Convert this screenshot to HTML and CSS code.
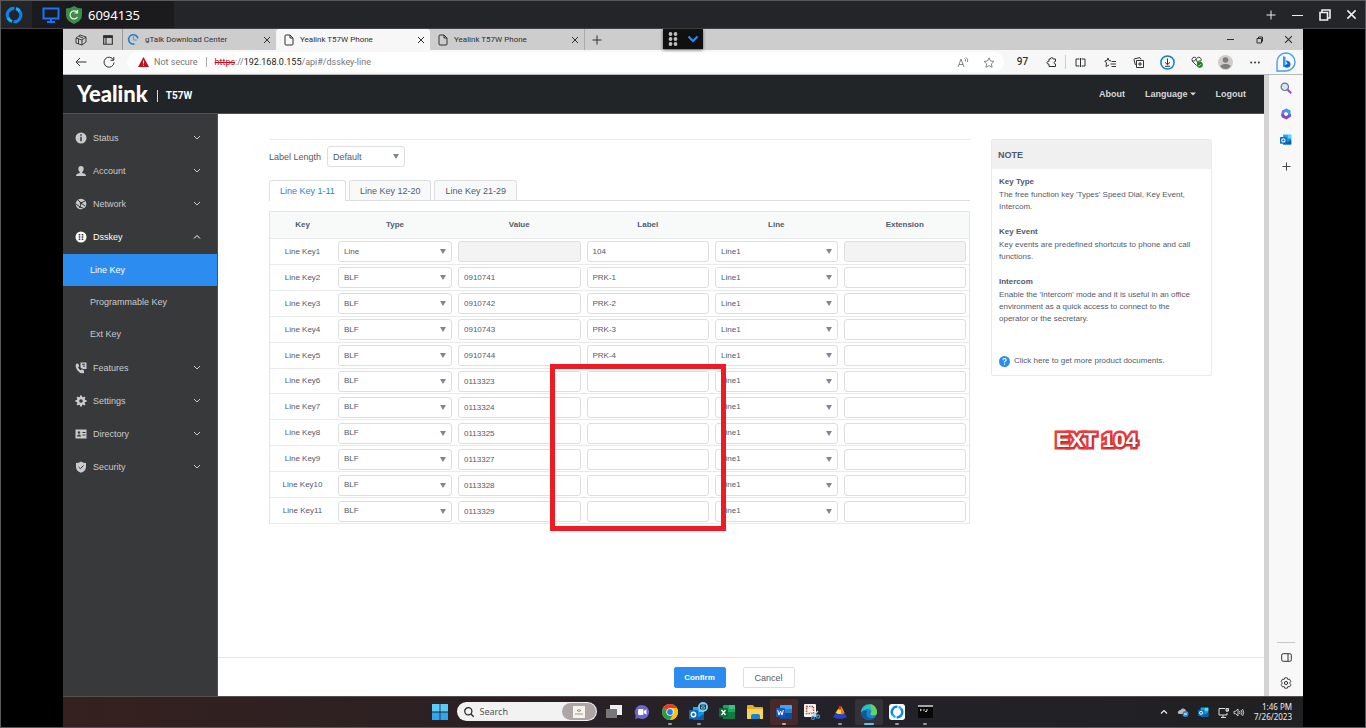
FILE: index.html
```html
<!DOCTYPE html>
<html lang="en">
<head>
<meta charset="utf-8">
<title>Yealink T57W Phone</title>
<link rel="stylesheet" href="styles.css">
</head>
<body>
<svg class="defs" aria-hidden="true">
  <symbol id="close" viewBox="0 0 8 8"><path d="M1 1l6 6M7 1L1 7" fill="none" stroke="currentColor"/></symbol>
  <symbol id="plus" viewBox="0 0 10 10"><path d="M5 0.5v9M0.5 5h9" fill="none" stroke="currentColor"/></symbol>
  <symbol id="page" viewBox="0 0 10 12"><path d="M1 2q0-1 1-1h4l3 3v6q0 1-1 1H2q-1 0-1-1zM6 1v3h3" fill="none" stroke="currentColor"/></symbol>
  <symbol id="down" viewBox="0 0 8 6"><path d="M1 1l3 3 3-3" fill="none" stroke="currentColor"/></symbol>
  <symbol id="outlook" viewBox="0 0 16 16"><path d="M5 1h9q1 0 1 1v11q0 1-1 1H5q-1 0-1-1V2q0-1 1-1z" fill="#1490df"/><path d="M10 1h5v5h-5z" fill="#50d9ff"/><path d="M4 1h6v5H4z" fill="#28a8ea"/><path d="M4 8l6 3 5-3v6H4z" fill="#0a5ea8"/><rect y="4" width="9" height="9" rx="1" fill="#0f6cbd"/><circle cx="4.500" cy="8.500" r="2.200" fill="none" stroke="#fff" stroke-width="1.400"/></symbol>
  <symbol id="ring" viewBox="0 0 18 18"><g fill="none" stroke-width="3"><path d="M3.600 13A6.800 6.800 0 0 1 9.500 2.200" stroke="#0a84f5"/><path d="M11 2.500A6.800 6.800 0 0 1 15 6" stroke="#12b4ff"/><path d="M14.600 5.200A6.800 6.800 0 0 1 8.500 15.800" stroke="#0a84f5"/><path d="M7 15.500A6.800 6.800 0 0 1 3 12" stroke="#12b4ff"/></g></symbol>
</svg>

<div class="viewer">
  <header class="session-bar">
    <span class="session-home"><svg width="18" height="18"><use href="#ring"/></svg></span>
    <div class="session-tab">
      <svg width="18" height="16" viewBox="0 0 18 16"><path d="M1.500 1.500h15v10h-15zM9 12v2.500M5 15h8" fill="none" stroke="#1473ff" stroke-width="2"/></svg>
      <svg width="16" height="18" viewBox="0 0 16 18"><path d="M8 0q4 2.500 8 2.500V9q0 6-8 9-8-3-8-9V2.500Q4 2.500 8 0z" fill="#3d8b46"/><path d="M11 6.200A4 4 0 1 0 11.500 11M11.500 4v3H8.500" fill="none" stroke="#e4f2e4" stroke-width="1.200"/></svg>
      <span>6094135</span>
    </div>
    <div class="session-controls">
      <button aria-label="New session"><svg width="10" height="10"><use href="#plus"/></svg></button>
      <button aria-label="Minimize"><svg width="11" height="10" viewBox="0 0 11 10"><path d="M0 5.500h11" stroke="currentColor" stroke-width="1"/></svg></button>
      <button aria-label="Restore"><svg width="12" height="12" viewBox="0 0 12 12"><path d="M1 3.500h7.500V11H1zM3 3V1h8v8H9" fill="none" stroke="currentColor" stroke-width="1.600"/></svg></button>
      <button aria-label="Close"><svg width="11" height="11" viewBox="0 0 8 8"><path d="M1 1l6 6M7 1L1 7" stroke="currentColor" stroke-width="1.100"/></svg></button>
    </div>
  </header>

  <div class="desktop">
    <div class="tab-strip">
      <button class="strip-button" aria-label="Workspaces"><svg width="12" height="12" viewBox="0 0 12 12"><path d="M1 4l4-3 6 2v5l-4 3-6-2zM1 4l6 2 4-3M7 6v5M4 2.500l4 1.500M3.500 5v5" fill="none" stroke="currentColor" stroke-width="0.900"/></svg></button>
      <button class="strip-button" aria-label="Tab actions"><svg width="10" height="10" viewBox="0 0 10 10"><path d="M0.700 0.700h8.600v8.600H0.700zM3 3v6" fill="none" stroke="currentColor" stroke-width="1.100"/><path d="M0.500 0.500h9v2.500h-9z" fill="currentColor"/></svg></button>
      <div class="tab tab-first"><svg width="11" height="11" viewBox="0 0 11 11"><path d="M6.500 10A4.700 4.700 0 1 1 10 4.500" fill="none" stroke="#2580c3" stroke-width="1.600"/><path d="M5.500 2v4h3.500" fill="none" stroke="#55a4d8" stroke-width="1.200"/></svg><span>gTalk Download Center</span><button aria-label="Close tab"><svg width="8" height="8"><use href="#close"/></svg></button></div>
      <div class="tab tab-active"><svg width="10" height="12"><use href="#page"/></svg><span>Yealink T57W Phone</span><button aria-label="Close tab"><svg width="8" height="8"><use href="#close"/></svg></button></div>
      <div class="tab"><svg width="10" height="12"><use href="#page"/></svg><span>Yealink T57W Phone</span><button aria-label="Close tab"><svg width="8" height="8"><use href="#close"/></svg></button></div>
      <button class="new-tab" aria-label="New tab"><svg width="10" height="10"><use href="#plus"/></svg></button>
      <div class="window-controls">
        <button aria-label="Minimize"><svg width="7" height="7" viewBox="0 0 7 7"><path d="M0 3.500h7" stroke="currentColor"/></svg></button>
        <button aria-label="Restore"><svg width="8" height="8" viewBox="0 0 8 8"><path d="M1 2.500h4.500V7H1zM2.500 2V1h4v4.500H6" fill="none" stroke="currentColor"/></svg></button>
        <button aria-label="Close"><svg width="9" height="9"><use href="#close"/></svg></button>
      </div>
      <div class="grip">
        <svg width="10" height="14" viewBox="0 0 10 14" fill="#bdbdbd"><circle cx="2.500" cy="2" r="1.900"/><circle cx="7.500" cy="2" r="1.900"/><circle cx="2.500" cy="7" r="1.900"/><circle cx="7.500" cy="7" r="1.900"/><circle cx="2.500" cy="12" r="1.900"/><circle cx="7.500" cy="12" r="1.900"/></svg>
        <svg width="12" height="8" viewBox="0 0 12 8"><path d="M1.500 1.500L6 6l4.500-4.500" fill="none" stroke="#1e90ff" stroke-width="2"/></svg>
      </div>
    </div>

    <div class="toolbar">
      <button class="nav-button" aria-label="Back"><svg width="12" height="10" viewBox="0 0 12 10"><path d="M11.500 5H1M5 1L1 5l4 4" fill="none" stroke="currentColor"/></svg></button>
      <button class="nav-button" aria-label="Reload"><svg width="12" height="12" viewBox="0 0 12 12"><path d="M10.500 4A5 5 0 1 0 11 6.500M10.800 1v3.300H7.500" fill="none" stroke="currentColor"/></svg></button>
      <div class="address">
        <svg width="11" height="10" viewBox="0 0 11 10"><path d="M5.500 0L11 10H0z" fill="#c50f1f"/><path d="M5.500 3.500v3.200M5.500 7.800v1" stroke="#fff"/></svg>
        <span class="insecure">Not secure</span>
        <span class="url"><s>https</s>://<b>192.168.0.155</b>/api#/dsskey-line</span>
        <button aria-label="Read aloud"><svg width="12" height="11" viewBox="0 0 12 11"><path d="M1 10l3-8 3 8M2 7.500h4M7.500 1.500q1.500 1 1 3M9 0.500q2.500 2 1.500 4.500" fill="none" stroke="currentColor" stroke-width="0.900"/></svg></button>
        <button aria-label="Favorite"><svg width="12" height="11" viewBox="0 0 12 11"><path d="M6 0.800l1.500 3.200 3.500.4-2.600 2.400.7 3.500L6 8.600l-3.100 1.700.7-3.500L1 4.400 4.500 4z" fill="none" stroke="currentColor" stroke-width="0.900"/></svg></button>
      </div>
      <div class="tools">
        <button class="counter">97</button>
        <button class="tool-divided" aria-label="Extensions"><svg width="11" height="11" viewBox="0 0 11 11"><path d="M3 2h1.500q0-1.500 1.200-1.500T7 2h2.500v2.500Q8 4.500 8 5.700T9.500 7v2.500H3V7.200Q1 7.300 1 5.700T3 4.300z" fill="none" stroke="currentColor"/></svg></button>
        <button aria-label="Split screen"><svg width="11" height="9" viewBox="0 0 11 9"><path d="M4.500 1H1v7h3.500M6.500 1H10v7H6.500M5.500 0v9" fill="none" stroke="currentColor"/></svg></button>
        <button aria-label="Favorites"><svg width="12" height="11" viewBox="0 0 12 11"><path d="M7 4L5 3.500 4 1 3 3.500.8 4 2.500 6 2 9.500l3-1.500M7.500 4.500H12M6.500 7H12M7.500 9.500H12" fill="none" stroke="currentColor"/></svg></button>
        <button aria-label="Collections"><svg width="11" height="11" viewBox="0 0 11 11"><path d="M3.500 3.500h7v7h-7zM7 5v4M5 7h4M2.500 8L1 3q-.3-1 .7-1.300L7 .7l1 1.800" fill="none" stroke="currentColor"/></svg></button>
        <button aria-label="Downloads"><svg width="15" height="15" viewBox="0 0 15 15"><circle cx="7.500" cy="7.500" r="6.600" fill="none" stroke="#0f7ac6" stroke-width="1.500"/><path d="M7.500 3.500v6M5 7.300l2.500 2.400L10 7.300M5 11.300h5" fill="none" stroke="currentColor"/></svg></button>
        <button aria-label="Browser essentials"><svg width="12" height="12" viewBox="0 0 12 12"><path d="M5.500 9.500L1.500 5.500Q0 3 2 1.500q2-1 3.500 1 1.500-2 3.500-1 2 1.500 1 3.500M1 5h2.500L5 3l1.500 3.500 1-1.500H10" fill="none" stroke="currentColor" stroke-width="0.900"/><circle cx="8.800" cy="8.800" r="3" fill="#13851a"/><path d="M7.300 9l1 1 1.800-2" fill="none" stroke="#fff" stroke-width="0.700"/></svg></button>
        <button aria-label="Profile"><svg width="15" height="15" viewBox="0 0 15 15"><circle cx="7.500" cy="7.500" r="7.500" fill="#cfcdca"/><circle cx="7.500" cy="5" r="2.800" fill="#7e7b78"/><path d="M2.500 11.500q0-2.500 5-2.500t5 2.500q-2 2.500-5 2.500t-5-2.500z" fill="#7e7b78"/></svg></button>
        <button aria-label="More"><svg width="10" height="3" viewBox="0 0 10 3" fill="currentColor"><circle cx="1.200" cy="1.500" r="1"/><circle cx="5" cy="1.500" r="1"/><circle cx="8.800" cy="1.500" r="1"/></svg></button>
      </div>
      <button class="bing" aria-label="Bing chat"><svg width="20" height="20" viewBox="0 0 20 20"><path d="M1 19V10a9 9 0 1 1 9 9z" fill="#f4faff" stroke="#4b9bea" stroke-width="1.400"/><path d="M7 4l2.500 1v9L7 15z" fill="#2a9df0"/><path d="M9.500 8.500q5 .3 5 3.800 0 3.500-4 3.500L7 14l2.500-1 2-1.500z" fill="#1664dc"/></svg></button>
    </div>

    <div class="browser-body">
      <div class="webpage">
        <header class="app-header">
          <div class="brand"><span class="logo">Yealink</span><span class="model">T57W</span></div>
          <nav class="app-links">
            <a href="#about">About</a>
            <a href="#language">Language<svg width="6" height="4" viewBox="0 0 6 4"><path d="M0 0.500h6l-3 3z" fill="currentColor"/></svg></a>
            <a href="#logout">Logout</a>
          </nav>
        </header>
        <div class="app-body">
          <nav class="side-menu">
            <a class="item" href="#status"><svg width="12" height="12" viewBox="0 0 12 12"><circle cx="6" cy="6" r="5.500" fill="currentColor"/><path d="M6 2.300v1.500M6 4.800v4.500" stroke="#38393b" stroke-width="1.500"/></svg><span>Status</span><svg width="8" height="6"><use href="#down"/></svg></a>
            <a class="item" href="#account"><svg width="12" height="12" viewBox="0 0 12 12"><path d="M6 1q2.700 0 2.700 3 0 2-1.500 3v1q3.800.5 3.800 3H1q0-2.500 3.800-3V7Q3.300 6 3.300 4q0-3 2.700-3z" fill="currentColor"/></svg><span>Account</span><svg width="8" height="6"><use href="#down"/></svg></a>
            <a class="item" href="#network"><svg width="12" height="12" viewBox="0 0 12 12"><circle cx="6" cy="6" r="5.300" fill="currentColor"/><path d="M3 2l3 3 4-2M6 5L5 9l4 1.500M1 6l4 3M6 5l4 3" fill="none" stroke="#38393b"/><circle cx="6" cy="5" r="1.300" fill="#38393b"/><circle cx="5" cy="9" r="1.100" fill="#38393b"/></svg><span>Network</span><svg width="8" height="6"><use href="#down"/></svg></a>
            <a class="item item-open" href="#dsskey"><svg width="12" height="12" viewBox="0 0 12 12"><circle cx="6" cy="6" r="5.500" fill="currentColor"/><path d="M3.700 3h1.600v1.500H3.700zM6.700 3h1.600v1.500H6.700zM3.700 5.300h1.600v1.500H3.700zM6.700 5.300h1.600v1.500H6.700zM3.700 7.600h1.600v1.500H3.700zM6.700 7.600h1.600v1.500H6.700z" fill="#38393b"/></svg><span>Dsskey</span><svg width="8" height="6" viewBox="0 0 8 6"><path d="M1 4.500l3-3 3 3" fill="none" stroke="currentColor"/></svg></a>
            <div class="submenu">
              <a class="current" href="#line-key">Line Key</a>
              <a href="#programmable-key">Programmable Key</a>
              <a href="#ext-key">Ext Key</a>
            </div>
            <a class="item" href="#features"><svg width="12" height="12" viewBox="0 0 12 12"><path d="M1.300 1.500l2 .2.900 2.500-1.200 1q.8 2 2.600 3l1.200-1 2.200 1.200V11Q5 12 2.300 8.200T1.300 1.500z" fill="currentColor"/><path d="M5.500.5h6V7H8L5.500 5.500z" fill="currentColor"/><path d="M7 2.300h3M8 4.200h2" stroke="#38393b"/></svg><span>Features</span><svg width="8" height="6"><use href="#down"/></svg></a>
            <a class="item" href="#settings"><svg width="12" height="12" viewBox="0 0 12 12"><circle cx="6" cy="6" r="3" fill="none" stroke="currentColor" stroke-width="2.400"/><path d="M6 .5v2M6 9.500v2M.5 6h2M9.500 6h2M2.100 2.100l1.400 1.400M8.500 8.500l1.400 1.400M9.900 2.100L8.500 3.500M3.500 8.500L2.100 9.900" stroke="currentColor" stroke-width="2"/></svg><span>Settings</span><svg width="8" height="6"><use href="#down"/></svg></a>
            <a class="item" href="#directory"><svg width="12" height="12" viewBox="0 0 12 12"><rect x=".5" y="1.500" width="11" height="9" fill="currentColor"/><circle cx="4" cy="4.500" r="1.200" fill="#38393b"/><path d="M2 8.500q0-2 2-2t2 2zM7.500 4h3v1h-3zM7.500 6.500h3v1h-3z" fill="#38393b"/></svg><span>Directory</span><svg width="8" height="6"><use href="#down"/></svg></a>
            <a class="item" href="#security"><svg width="12" height="12" viewBox="0 0 12 12"><path d="M6 .5q2.500 1.500 5 1.500v4q0 4-5 5.800Q1 10 1 6V2q2.500 0 5-1.500z" fill="currentColor"/><path d="M3.700 6l1.700 1.700L8.500 4.500" fill="none" stroke="#38393b"/></svg><span>Security</span><svg width="8" height="6"><use href="#down"/></svg></a>
          </nav>
          <main class="content">
            <div class="columns">
              <section class="settings">
                <div class="length-row"><label for="label-length">Label Length</label><select id="label-length"><option>Default</option></select></div>
                <div class="key-tabs"><button class="selected">Line Key 1-11</button><button>Line Key 12-20</button><button>Line Key 21-29</button></div>
                <div class="table-wrap">
                  <table class="keys">
                    <colgroup><col class="col-key"><col class="col-type"><col><col><col><col></colgroup>
                    <thead><tr><th>Key</th><th>Type</th><th>Value</th><th>Label</th><th>Line</th><th>Extension</th></tr></thead>
                    <tbody>
                      <tr><td>Line Key1</td><td><select aria-label="Type 1"><option>Line</option></select></td><td><input aria-label="Value 1" disabled></td><td><input aria-label="Label 1" value="104"></td><td><select aria-label="Line 1"><option>Line1</option></select></td><td><input aria-label="Extension 1" disabled></td></tr>
                      <tr><td>Line Key2</td><td><select aria-label="Type 2"><option>BLF</option></select></td><td><input aria-label="Value 2" value="0910741"></td><td><input aria-label="Label 2" value="PRK-1"></td><td><select aria-label="Line 2"><option>Line1</option></select></td><td><input aria-label="Extension 2"></td></tr>
                      <tr><td>Line Key3</td><td><select aria-label="Type 3"><option>BLF</option></select></td><td><input aria-label="Value 3" value="0910742"></td><td><input aria-label="Label 3" value="PRK-2"></td><td><select aria-label="Line 3"><option>Line1</option></select></td><td><input aria-label="Extension 3"></td></tr>
                      <tr><td>Line Key4</td><td><select aria-label="Type 4"><option>BLF</option></select></td><td><input aria-label="Value 4" value="0910743"></td><td><input aria-label="Label 4" value="PRK-3"></td><td><select aria-label="Line 4"><option>Line1</option></select></td><td><input aria-label="Extension 4"></td></tr>
                      <tr><td>Line Key5</td><td><select aria-label="Type 5"><option>BLF</option></select></td><td><input aria-label="Value 5" value="0910744"></td><td><input aria-label="Label 5" value="PRK-4"></td><td><select aria-label="Line 5"><option>Line1</option></select></td><td><input aria-label="Extension 5"></td></tr>
                      <tr><td>Line Key6</td><td><select aria-label="Type 6"><option>BLF</option></select></td><td><input aria-label="Value 6" value="0113323"></td><td><input aria-label="Label 6"></td><td><select aria-label="Line 6"><option>Line1</option></select></td><td><input aria-label="Extension 6"></td></tr>
                      <tr><td>Line Key7</td><td><select aria-label="Type 7"><option>BLF</option></select></td><td><input aria-label="Value 7" value="0113324"></td><td><input aria-label="Label 7"></td><td><select aria-label="Line 7"><option>Line1</option></select></td><td><input aria-label="Extension 7"></td></tr>
                      <tr><td>Line Key8</td><td><select aria-label="Type 8"><option>BLF</option></select></td><td><input aria-label="Value 8" value="0113325"></td><td><input aria-label="Label 8"></td><td><select aria-label="Line 8"><option>Line1</option></select></td><td><input aria-label="Extension 8"></td></tr>
                      <tr><td>Line Key9</td><td><select aria-label="Type 9"><option>BLF</option></select></td><td><input aria-label="Value 9" value="0113327"></td><td><input aria-label="Label 9"></td><td><select aria-label="Line 9"><option>Line1</option></select></td><td><input aria-label="Extension 9"></td></tr>
                      <tr><td>Line Key10</td><td><select aria-label="Type 10"><option>BLF</option></select></td><td><input aria-label="Value 10" value="0113328"></td><td><input aria-label="Label 10"></td><td><select aria-label="Line 10"><option>Line1</option></select></td><td><input aria-label="Extension 10"></td></tr>
                      <tr><td>Line Key11</td><td><select aria-label="Type 11"><option>BLF</option></select></td><td><input aria-label="Value 11" value="0113329"></td><td><input aria-label="Label 11"></td><td><select aria-label="Line 11"><option>Line1</option></select></td><td><input aria-label="Extension 11"></td></tr>
                    </tbody>
                  </table>
                  <div class="highlight"></div>
                </div>
              </section>
              <aside class="aside">
                <div class="note">
                  <h2>NOTE</h2>
                  <div class="note-body">
                    <h3>Key Type</h3><p>The free function key 'Types' Speed Dial, Key Event, Intercom.</p>
                    <h3>Key Event</h3><p>Key events are predefined shortcuts to phone and call functions.</p>
                    <h3>Intercom</h3><p>Enable the 'Intercom' mode and it is useful in an office environment as a quick access to connect to the operator or the secretary.</p>
                    <a class="docs" href="#docs"><svg width="11" height="11" viewBox="0 0 11 11"><circle cx="5.500" cy="5.500" r="5.500" fill="#2d8cf0"/><path d="M3.800 4.200q0-1.700 1.700-1.700t1.700 1.500q0 .8-1 1.300-.7.400-.7 1.200M5.500 7.500v1.200" fill="none" stroke="#fff" stroke-width="1.100"/></svg><span>Click here to get more product documents.</span></a>
                  </div>
                </div>
                <div class="callout">EXT 104</div>
              </aside>
            </div>
            <footer class="actions"><button class="confirm">Confirm</button><button class="cancel">Cancel</button></footer>
          </main>
        </div>
      </div>
      <div class="scrollbar"></div>
      <aside class="edge-bar">
        <button aria-label="Search"><svg width="12" height="12" viewBox="0 0 12 12"><path d="M7.500 7.500l3.700 3.700" stroke="#b035e8" stroke-width="2"/><circle cx="4.800" cy="4.800" r="3.700" fill="#cfe8fa" stroke="#667685" stroke-width="1.200"/></svg></button>
        <button aria-label="Microsoft 365"><svg width="12" height="12" viewBox="0 0 12 12"><path d="M6.500.5L2 2.500 1 7l3 2.500V5l4-2.500z" fill="#6a7de8"/><path d="M6.500.5l4 2V7L8 8.500V5L4 3.500z" fill="#38a4e8"/><path d="M1 7l3-1 1.500 2L11 6v2.500L6.500 11.500 2 9.500z" fill="#8c46c9"/><circle cx="6" cy="6" r="1.500" fill="#fff"/></svg></button>
        <button aria-label="Outlook"><svg width="12" height="12"><use href="#outlook"/></svg></button>
        <button aria-label="Customize"><svg width="9" height="9"><use href="#plus"/></svg></button>
        <div class="edge-bottom">
          <button aria-label="Toggle sidebar"><svg width="11" height="9" viewBox="0 0 11 9"><rect x=".7" y=".7" width="9.600" height="7.600" rx="1.500" fill="none" stroke="currentColor"/><path d="M7 1v7" stroke="currentColor"/></svg></button>
          <button aria-label="Settings"><svg width="12" height="12" viewBox="0 0 12 12"><path d="M4.700.8h2.600l.5 1.700 1.700-.4 1.300 2.200L9.600 6l1.200 1.700-1.300 2.200-1.700-.4-.5 1.700H4.700l-.5-1.700-1.700.4-1.300-2.200L2.400 6 1.200 4.300l1.300-2.200 1.700.4z" fill="none" stroke="currentColor" stroke-width=".9"/><circle cx="6" cy="6" r="1.600" fill="none" stroke="currentColor"/></svg></button>
        </div>
      </aside>
    </div>

    <footer class="taskbar">
      <div class="task-center">
        <button class="start" aria-label="Start"><svg width="16" height="16" viewBox="0 0 16 16"><path d="M0 0h7.600v7.600H0zM8.400 0H16v7.600H8.400z" fill="#5ccbf8"/><path d="M0 8.400h7.600V16H0zM8.400 8.400H16V16H8.400z" fill="#2aa7ef"/></svg></button>
        <div class="task-search">
          <svg width="10" height="10" viewBox="0 0 10 10"><circle cx="4.300" cy="4.300" r="3.600" fill="none" stroke="#222" stroke-width="1.200"/><path d="M7 7l2.700 2.700" stroke="#222" stroke-width="1.300"/></svg>
          <input type="text" placeholder="Search" aria-label="Search">
          <span class="search-badge"><svg width="12" height="12" viewBox="0 0 12 12"><path d="M0 0h12v12H0z" fill="#f5f3ef"/><path d="M4 4.500q2-2 4 0-2 2-4 0zM2 8h8" fill="none" stroke="#8f8161" stroke-width=".8"/></svg></span>
        </div>
        <div class="apps">
          <button aria-label="Task view"><svg width="16" height="16" viewBox="0 0 16 16"><path d="M4 1h12v10H4z" fill="#eee"/><path d="M0 5h11v9H0z" fill="#777"/></svg></button>
          <button aria-label="Chat"><svg width="16" height="16" viewBox="0 0 16 16"><path d="M8 1a7 7 0 1 1-3.500 13L1 15l.8-3.500A7 7 0 0 1 8 1z" fill="#6a67ce"/><rect x="4" y="5" width="5.500" height="6" rx="1" fill="#fff"/><path d="M10 7l2.500-1.700v5.400L10 9z" fill="#fff"/></svg></button>
          <button class="running" aria-label="Chrome"><svg width="16" height="16" viewBox="0 0 16 16"><circle cx="8" cy="8" r="8" fill="#fbc116"/><path d="M8 8L1.100 4A8 8 0 0 1 14.900 4H8z" fill="#e53a31"/><path d="M8 8l-6.900-4A8 8 0 0 0 8 16l3.500-6z" fill="#2b9b4a"/><path d="M8 16a8 8 0 0 0 6.900-12H8l3.500 6z" fill="#fbc116"/><circle cx="8" cy="8" r="3.700" fill="#fff"/><circle cx="8" cy="8" r="2.900" fill="#2c7be5"/></svg></button>
          <button class="running" aria-label="Outlook"><svg width="20" height="20" viewBox="0 0 20 20"><svg y="4" width="16" height="16"><use href="#outlook"/></svg><circle cx="14" cy="5" r="5" fill="#7fcdf0"/><path d="M11.500 3h5v4h-5zM11.500 3.500L14 5.500l2.500-2" fill="none" stroke="#153a54"/></svg></button>
          <button aria-label="Excel"><svg width="16" height="16" viewBox="0 0 16 16"><rect x="4" y="1" width="12" height="14" rx="1" fill="#21a366"/><path d="M10 1h5q1 0 1 1v3h-6z" fill="#33c481"/><path d="M4 8h12v6q0 1-1 1H5q-1 0-1-1z" fill="#107c41"/><rect y="4" width="9" height="9" rx="1" fill="#0d6b38"/><path d="M2.500 6l4 5M6.500 6l-4 5" stroke="#fff" stroke-width="1.300"/></svg></button>
          <button aria-label="File Explorer"><svg width="16" height="16" viewBox="0 0 16 16"><path d="M0 2q0-1 1-1h5l1.500 2H15q1 0 1 1v10q0 1-1 1H1q-1 0-1-1z" fill="#e9a820"/><path d="M0 5h16v9q0 1-1 1H1q-1 0-1-1z" fill="#ffd35a"/><path d="M4 15v-3q0-2 2-2h5q2 0 2 2v3z" fill="#1783d1"/></svg></button>
          <button class="running alert" aria-label="Word"><svg width="16" height="16" viewBox="0 0 16 16"><rect x="4" y="1" width="12" height="14" rx="1" fill="#2b7cd3"/><path d="M4 2q0-1 1-1h10q1 0 1 1v3H4z" fill="#41a5ee"/><path d="M4 9h12v5q0 1-1 1H5q-1 0-1-1z" fill="#124a9c"/><rect y="4" width="9" height="9" rx="1" fill="#185abd"/><path d="M1.700 6l1.300 5 1.500-4L6 11l1.300-5" fill="none" stroke="#fff"/></svg></button>
          <button aria-label="Snipping Tool"><svg width="16" height="16" viewBox="0 0 16 16"><rect width="12" height="13" rx="1" fill="#f5f5f5"/><path d="M2.500 2.500h7v7h-7z" fill="none" stroke="#d6492f" stroke-width="1.500" stroke-dasharray="1.500 1"/><path d="M6 8l8 4M8 13l6-6" stroke="#b4c5cf" stroke-width="1.300"/><circle cx="14" cy="12.500" r="1.700" fill="none" stroke="#3196d3" stroke-width="1.200"/><circle cx="9" cy="14" r="1.500" fill="none" stroke="#3196d3" stroke-width="1.200"/></svg></button>
          <button class="running" aria-label="Media player"><svg width="14" height="16" viewBox="0 0 14 16"><path d="M7 1l2 4q-2 1-4 0z" fill="#e52b21"/><path d="M5 5q2 1 4 0l2.500 4Q7 11.500 2.500 9z" fill="#f2db28"/><path d="M2.500 9Q7 11.500 11.500 9L14 13q-7 4-14 0z" fill="#2c40c5"/><path d="M8 2l2 3 1.500 4q-2 1.500-3.500 1.500z" fill="#e57822"/></svg></button>
          <button class="running focused" aria-label="Edge"><svg width="16" height="16" viewBox="0 0 16 16"><circle cx="8" cy="8" r="8" fill="#1687cf"/><path d="M.5 6A8 8 0 0 1 16 8q0 3.300-3.500 3.300-3 0-3-1.500 1.500-1 .8-3Q9 4.500 6 5T.5 9z" fill="#35c1b1"/><path d="M9 0a8 8 0 0 1 7 8q0 3.300-3.500 3.300-3 0-3-1.500Q12 7 9 0z" fill="#66d35d"/><path d="M6 7q-2 5 2 7 3 1 6-1-3 4-8 2.500Q.500 14 .3 8.500 3 5 6 7z" fill="#0c59a4"/></svg></button>
          <button class="running" aria-label="Remote desktop"><svg width="16" height="16" viewBox="0 0 16 16"><rect width="16" height="16" rx="3" fill="#fff"/><svg x="1" y="1" width="14" height="14"><use href="#ring"/></svg></svg></button>
          <button class="running" aria-label="Command Prompt"><svg width="15" height="13" viewBox="0 0 15 13"><rect width="15" height="13" rx="1" fill="#080808"/><path d="M0 0h15v2H0z" fill="#a5a5a5"/><path d="M2 4l1.500 1L2 6M5 5h2M8 5h2M7 6.500h2" fill="none" stroke="#eee" stroke-width=".9"/></svg></button>
        </div>
      </div>
      <div class="tray">
        <svg width="8" height="6" viewBox="0 0 8 6"><path d="M1 4.500l3-3 3 3" fill="none" stroke="#eee" stroke-width="1.200"/></svg>
        <svg width="12" height="10" viewBox="0 0 12 10"><path d="M2 7Q0 6 1 4.500 2 3 3.500 3q1-2 3-1.500Q9 2 9 4l1 3z" fill="#b9b9bb"/><circle cx="8.500" cy="7" r="3" fill="#1d8ad4"/><path d="M7 6.500l3 1M10 5.500l-3 3" stroke="#fff" stroke-width=".7"/></svg>
        <svg width="11" height="11"><use href="#outlook"/></svg>
        <span class="tray-pair"><svg width="11" height="11" viewBox="0 0 11 11"><path d="M7 1.500H1v6.500h8V6M3 10.500h5M5 8v2M9 1v4M8 1.500h2.500V4H8z" fill="none" stroke="#ddd"/></svg>
        <svg width="12" height="9" viewBox="0 0 12 9"><path d="M1 3.300h1.500L5 1v7L2.500 5.700H1zM6.500 3q1 1.500 0 3M8 2q2 2.500 0 5M9.500 1q2.500 3.500 0 7" fill="none" stroke="#ddd" stroke-width=".9"/></svg></span>
        <div class="clock"><time>1:46 PM</time><time>7/26/2023</time></div>
      </div>
    </footer>
  </div>
</div>
</body>
</html>
```
FILE: styles.css
```css
* { box-sizing: border-box; }
body { margin: 0; background: #000; color: #515a6e; font: 8px/12px "Liberation Sans", Arial, sans-serif; }
button, input, select { margin: 0; font: inherit; color: inherit; }
button { display: flex; align-items: center; justify-content: center; padding: 0; border: 0; background: none; }
a { color: inherit; text-decoration: none; }
svg { display: block; flex: none; overflow: visible; }
h2, h3, p { margin: 0; font-size: inherit; }
.defs { position: absolute; width: 0; height: 0; }

.viewer { display: flex; flex-direction: column; min-height: 100vh; border: 1px solid #58595b; }
.session-bar { display: flex; flex: none; height: 28px; background: #242529; border-bottom: 1px solid #444246; }
.session-home { display: grid; place-items: center; width: 26px; margin-right: 5px; }
.session-tab { display: flex; align-items: center; gap: 6px; width: 142px; padding-left: 10px; background: #1b1b1e; color: #fff; font: 13px/20px "Noto Sans", sans-serif; }
.session-controls { display: flex; margin-left: auto; color: #eee; }
.session-controls button { width: 27px; }

.desktop { position: relative; display: flex; flex: 1; flex-direction: column; margin: 0 62px; }
.tab-strip { position: relative; display: flex; flex: none; height: 21px; padding-left: 4px; background: #cdcdcd; color: #303030; font: 8px/12px Roboto, sans-serif; }
.strip-button { width: 27px; }
.tab { display: flex; align-items: center; gap: 6px; width: 154px; padding: 0 5px 0 8px; }
.tab-first { margin-left: 1px; padding-left: 6px; box-shadow: inset 1px 0 #999; }
.tab-active { background: #f7f7f7; border-radius: 3px 3px 0 0; }
.tab button { width: 9px; margin-left: auto; }
.new-tab { width: 26px; box-shadow: inset 1px 0 #aaa; }
.window-controls { display: flex; margin-left: auto; }
.window-controls button { width: 29px; }
.grip { position: absolute; top: 0; left: 600px; display: flex; align-items: center; justify-content: space-around; width: 40px; height: 20px; background: #101010; box-shadow: 0 1px 3px #0008; }

.toolbar { display: flex; flex: none; align-items: center; height: 25px; padding-left: 4px; background: #f7f7f7; border-bottom: 1px solid #b9b9b9; color: #333; font: 9px/14px Roboto, sans-serif; }
.nav-button { width: 28px; }
.address { display: flex; flex: 1; align-items: center; gap: 5px; height: 20px; margin: 0 4px; padding: 0 5px 0 11px; border-radius: 10px; background: #fff; color: #777; }
.insecure { padding-right: 8px; border-right: 1px solid #aaa; line-height: 10px; margin-right: 3px; }
.url { margin-right: auto; }
.url s { color: #c50f1f; }
.url b { color: #222; font-weight: 400; }
.address button { width: 21px; }
.tools { display: flex; align-items: center; }
.tools button { width: 29px; height: 14px; }
.tools .counter { font-size: 10px; font-weight: 500; }
.tools .tool-divided { border-right: 1px solid #ccc; }
.bing { width: 34px; }

.browser-body { display: flex; flex: 1; }
.webpage { display: flex; flex: 1; flex-direction: column; background: #fff; }
.scrollbar { width: 5px; background: #d3d3d3; }
.edge-bar { display: flex; flex-direction: column; width: 34px; background: #f8f8f8; color: #333; }
.edge-bar button { width: 100%; height: 26px; }
.edge-bottom { margin-top: auto; padding-top: 2px; background: linear-gradient(#c7c7c7, #c7c7c7) center top / 18px 1px no-repeat; }

.app-header { display: flex; align-items: center; justify-content: space-between; height: 39px; padding: 0 18px 0 14px; background: #222527; border-bottom: 1px solid #505356; color: #d5d7d8; }
.brand { display: flex; align-items: center; color: #fff; }
.logo { padding-right: 9px; font: 900 22px/24px Lato, sans-serif; }
.model { margin-top: 4px; padding-left: 8px; border-left: 1px solid #ddd; font: 700 10px/12px Roboto, sans-serif; }
.app-links { display: flex; gap: 20px; font-size: 9px; font-weight: 700; }
.app-links a { display: flex; align-items: center; gap: 2px; }

.app-body { display: flex; flex: 1; }
.side-menu { flex: none; width: 155px; padding-top: 7px; background: #38393b; border-right: 1px solid #505153; color: #c9cacb; font-size: 9px; }
.item { display: flex; align-items: center; gap: 6px; height: 33px; padding: 0 16px 0 12px; }
.item span { flex: 1; }
.item-open { color: #fff; }
.submenu { padding: 1px 0; }
.submenu a { display: flex; align-items: center; height: 32px; padding-left: 27px; }
.submenu .current { background: #2d8cf0; color: #fff; }

.content { display: flex; flex: 1; flex-direction: column; }
.columns { display: flex; flex: 1; align-items: flex-start; gap: 21px; padding: 25px 52px 0 51px; }
.settings { flex: 1; border-top: 1px solid #e8eaec; }
.length-row { display: flex; align-items: center; gap: 6px; padding-top: 6px; font-size: 9px; }
select, input { width: 100%; height: 21px; border: 1px solid #dcdee2; border-radius: 3px; background: #fff; padding: 0 5px; outline: 0; }
select { appearance: none; background: #fff url("data:image/svg+xml,%3Csvg xmlns='http://www.w3.org/2000/svg' width='6' height='5'%3E%3Cpath d='M0 0h6L3 5z' fill='%23808695'/%3E%3C/svg%3E") right 5px center no-repeat; }
.length-row select { width: 78px; }
input:disabled { background: #f3f3f3; }
.key-tabs { display: flex; gap: 3px; margin-top: 13px; border-bottom: 1px solid #dcdee2; font-size: 9px; }
.key-tabs button { height: 20px; padding: 0 10px; border: 1px solid #dcdee2; border-bottom: 0; border-radius: 3px 3px 0 0; background: #f8faf9; }
.key-tabs .selected { margin-bottom: -1px; height: 21px; background: #fff; color: #2d7fd6; }
.table-wrap { position: relative; margin-top: 10px; }
.keys { width: 100%; height: 313px; table-layout: fixed; border-collapse: separate; border-spacing: 0; border: 1px solid #e3e5e8; border-bottom: 0; text-align: center; }
.col-key { width: 65px; }
.col-type { width: 120px; }
.keys th { height: 27px; padding: 0; background: #f8faf9; border-bottom: 1px solid #e8eaec; }
.keys td { padding: 2px 3px 1px; border-bottom: 1px solid #e8eaec; }
.keys td > * { display: block; }
.highlight { position: absolute; left: 281px; top: 153px; width: 176px; height: 167px; border: 5px solid #ed1c24; pointer-events: none; }

.aside { width: 221px; }
.note { border: 1px solid #e8eaec; border-radius: 2px; }
.note h2 { padding: 8px 6px 7px; background: #f0f0f0; font-size: 9px; line-height: 14px; }
.note-body { padding: 6px 12px 7px 7px; }
.note h3 { line-height: 14px; }
.note p { margin-bottom: 12px; }
.docs { display: flex; align-items: center; gap: 4px; margin-top: 29px; line-height: 14px; }
.callout { margin: 48px 10px 0 0; text-align: center; color: #fff; font: 700 21px/32px "Liberation Sans", Arial, sans-serif; -webkit-text-stroke: 5px #f03a3a; paint-order: stroke fill; text-shadow: 1px 1px 2px #0005; }
.actions { display: flex; justify-content: center; gap: 17px; padding: 9px 14px 8px 0; border-top: 1px solid #e1e3e5; }
.actions button { width: 52px; height: 21px; border: 1px solid #dcdee2; border-radius: 2px; font: 9px/12px "Liberation Sans", Arial, sans-serif; }
.actions .confirm { border-color: #2d8cf0; background: #2d8cf0; color: #fff; font-size: 8px; font-weight: 700; }

.taskbar { display: grid; flex: none; grid-template-columns: 1fr auto 1fr; height: 31px; border-top: 1px solid #55504f; background: linear-gradient(90deg, #35211f, #2b2023 35%, #24222a 55%, #202022); }
.task-center { grid-column: 2; display: flex; align-items: center; padding-bottom: 1px; }
.start { width: 26px; margin-right: 4px; }
.task-search { display: flex; align-items: center; gap: 6px; width: 140px; height: 19px; margin-right: 3px; padding: 0 1px 0 7px; border-radius: 10px; background: #f3f2f2; font: 9px/12px "Noto Sans", sans-serif; }
.task-search input { flex: 1; min-width: 0; height: 15px; padding: 0; border: 0; background: none; }
.task-search input::placeholder { color: #555; opacity: 1; }
.search-badge { display: grid; place-items: center; width: 34px; height: 17px; border-radius: 9px; background: #aea6a5; }
.apps { display: grid; grid-template-columns: repeat(12, 1fr); align-items: center; width: 340px; height: 28px; }
.apps button { position: relative; height: 26px; border-radius: 2px; }
.running::after { position: absolute; bottom: 0; left: calc(50% - 2px); width: 4px; height: 2px; border-radius: 1px; background: #999; content: ""; }
.apps .alert { background: #482928; }
.alert::after { background: #f29a97; }
.apps .focused { background: #343237; }
.focused::after { left: calc(50% - 5px); width: 10px; background: #5cc4f5; }
.tray { display: flex; align-items: center; justify-content: flex-end; gap: 9px; padding-right: 11px; }
.tray-pair { display: flex; align-items: center; gap: 4px; }
.clock { display: flex; flex-direction: column; color: #eee; text-align: right; font: 8px/10px "Noto Sans", sans-serif; }
```
